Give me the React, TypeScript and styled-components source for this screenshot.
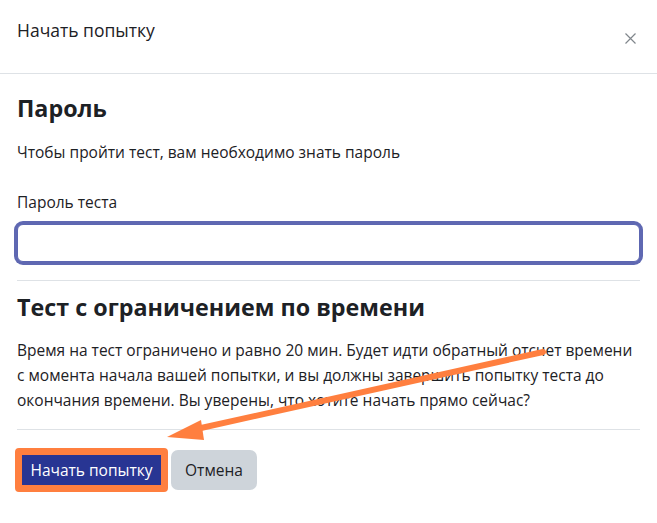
import React, { useState } from 'react';
import styled, { createGlobalStyle } from 'styled-components';

const GlobalStyle = createGlobalStyle`
  html, body {
    margin: 0;
    padding: 0;
    background: #ffffff;
  }
  body {
    font-family: "Open Sans", "Noto Sans", sans-serif;
    color: #1d2125;
  }
  * {
    box-sizing: border-box;
  }
`;

export default function App() {
  const [password, setPassword] = useState('');

  return (
    <>
      <GlobalStyle />
      <Modal>
        <Header>
          <Title>Начать попытку</Title>
          <CloseButton aria-label="Закрыть">
            <svg width="11" height="11" viewBox="0 0 11 11">
              <path d="M0.5 0.5L10.5 10.5M10.5 0.5L0.5 10.5" stroke="#80868c" strokeWidth="1.2" />
            </svg>
          </CloseButton>
        </Header>
        <Body>
          <Section>
            <Heading>Пароль</Heading>
            <Text>Чтобы пройти тест, вам необходимо знать пароль</Text>
            <Label htmlFor="quizpassword">Пароль теста</Label>
            <Input
              id="quizpassword"
              type="password"
              value={password}
              onChange={(e) => setPassword(e.currentTarget.value)}
              autoFocus
            />
          </Section>
          <Divider />
          <Section $top={10.5}>
            <Heading>Тест с ограничением по времени</Heading>
            <Paragraph>
              Время на тест ограничено и равно 20 мин. Будет идти обратный отсчет времени
              с момента начала вашей попытки, и вы должны завершить попытку теста до
              окончания времени. Вы уверены, что хотите начать прямо сейчас?
            </Paragraph>
          </Section>
          <Divider />
          <Footer>
            <Button $variant="primary">Начать попытку</Button>
            <Button $variant="secondary">Отмена</Button>
          </Footer>
        </Body>
        <Arrow width="657" height="523" viewBox="0 0 657 523">
          <line x1="543" y1="352" x2="192" y2="430" stroke="#ff7f3f" strokeWidth="6" strokeLinecap="round" />
          <polygon points="167,437 201,420 204,440" fill="#ff7f3f" />
        </Arrow>
      </Modal>
    </>
  );
}

const Modal = styled.div`
  position: relative;
  width: 657px;
  height: 523px;
  background: #ffffff;
  overflow: hidden;
`;

const Header = styled.div`
  display: flex;
  align-items: flex-start;
  justify-content: space-between;
  height: 74px;
  padding: 18px 21px 0 17px;
  border-bottom: 1px solid #dee2e6;
`;

const Title = styled.h5`
  margin: 0;
  font-size: 17.5px;
  font-weight: 400;
  line-height: 24px;
`;

const CloseButton = styled.button`
  margin-top: 15px;
  padding: 0;
  border: none;
  background: transparent;
  display: flex;
  cursor: pointer;
`;

const Body = styled.div`
  padding: 19px 17px 0 17px;
`;

const Section = styled.div<{ $top?: number }>`
  display: flex;
  flex-direction: column;
  padding-top: ${({ $top }) => $top ?? 0}px;
`;

const Heading = styled.h3`
  margin: 0 0 16.5px;
  font-size: 23.3px;
  font-weight: 700;
  line-height: 30px;
`;

const Text = styled.p`
  margin: 0 0 25px;
  font-size: 15.5px;
  line-height: 25px;
`;

const Label = styled.label`
  margin-bottom: 9.5px;
  font-size: 15.5px;
  line-height: 25px;
`;

const Input = styled.input`
  height: 38px;
  margin: 0 0 18px;
  padding: 4px 12px;
  border: 1px solid #5c66b1;
  border-radius: 6px;
  box-shadow: 0 0 0 3px #5f68b2;
  font-size: 15.5px;
  outline: none;
  caret-color: #1d2125;
`;

const Divider = styled.hr`
  margin: 0;
  border: none;
  border-top: 1px solid #dee2e6;
`;

const Paragraph = styled.p`
  max-width: 620px;
  margin: 0 0 16px;
  font-size: 15.5px;
  line-height: 25px;
`;

const Footer = styled.div`
  display: flex;
  align-items: center;
  gap: 3px;
  padding-top: 18px;
  margin-left: -2px;
`;

const Button = styled.button<{ $variant: 'primary' | 'secondary' }>`
  font-family: "Open Sans", "Noto Sans", sans-serif;
  font-size: 15.5px;
  line-height: 24px;
  cursor: pointer;
  ${({ $variant }) =>
    $variant === 'primary'
      ? `
    height: 44px;
    width: 153px;
    padding: 0;
    background: #283593;
    color: #ffffff;
    border: 7px solid #ff7f3f;
    border-radius: 4px;
  `
      : `
    height: 40px;
    width: 86px;
    padding: 0;
    background: #ced4da;
    color: #1d2125;
    border: none;
    border-radius: 7px;
  `}
`;

const Arrow = styled.svg`
  position: absolute;
  left: 0;
  top: 0;
  pointer-events: none;
`;
